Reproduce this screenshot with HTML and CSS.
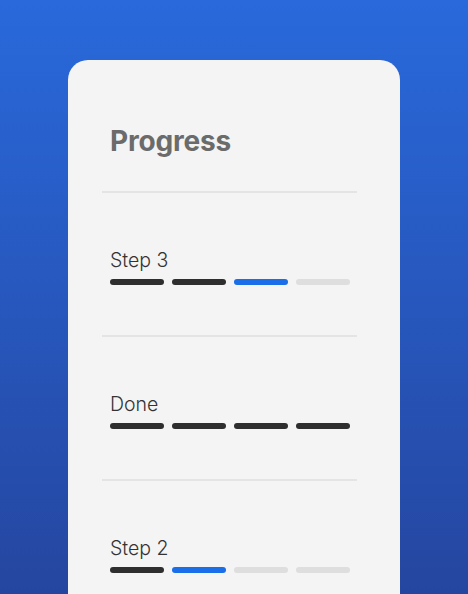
FILE: index.html
```html
<!DOCTYPE html>
<html lang="en">
<head>
    <meta charset="UTF-8">
    <meta name="viewport" content="width=device-width, initial-scale=1.0">
    <title>Progress</title>
    <link rel="stylesheet" href="styles.css">
</head>
<body>
    <div class="page">
        <div class="card">
            <h1 class="card-title">Progress</h1>

            <div class="step">
                <div class="step-label">Step 3</div>
                <div class="bars">
                    <span class="bar done"></span>
                    <span class="bar done"></span>
                    <span class="bar active"></span>
                    <span class="bar"></span>
                </div>
            </div>

            <div class="step">
                <div class="step-label">Done</div>
                <div class="bars">
                    <span class="bar done"></span>
                    <span class="bar done"></span>
                    <span class="bar done"></span>
                    <span class="bar done"></span>
                </div>
            </div>

            <div class="step">
                <div class="step-label">Step 2</div>
                <div class="bars">
                    <span class="bar done"></span>
                    <span class="bar active"></span>
                    <span class="bar"></span>
                    <span class="bar"></span>
                </div>
            </div>
        </div>
    </div>
</body>
</html>
```

FILE: styles.css
```css
html, body {
    margin: 0;
    padding: 0;
    height: 100%;
}
body {
    font-family: 'Inter', 'Noto Sans', sans-serif;
    overflow: hidden;
}
.page {
    height: 594px;
    background: linear-gradient(180deg, #2969db 0%, #2546a0 100%);
    padding: 60px 68px 0 68px;
    box-sizing: border-box;
    overflow: hidden;
}
.card {
    background-color: #f4f4f4;
    border-radius: 20px;
    padding: 64px 0 80px 0;
    min-height: 700px;
    box-sizing: border-box;
}
.card-title {
    margin: 0 0 33px 42px;
    font-size: 28px;
    line-height: 34px;
    font-weight: 700;
    color: #6b6b6b;
    letter-spacing: -0.2px;
}
.step {
    border-top: 2px solid #e4e4e4;
    margin-left: 34px;
    width: 255px;
    box-sizing: border-box;
    padding: 55px 0 50px 8px;
}
.step-label {
    font-size: 19.5px;
    line-height: 24px;
    font-weight: 300;
    color: #333333;
    letter-spacing: 0;
    margin-bottom: 7px;
}
.bars {
    display: flex;
    gap: 8px;
    width: 240px;
}
.bar {
    flex: 1;
    height: 6px;
    border-radius: 3px;
    background-color: #dedede;
}
.bar.done {
    background-color: #2e2e2e;
}
.bar.active {
    background-color: #1a6ee8;
}
```
